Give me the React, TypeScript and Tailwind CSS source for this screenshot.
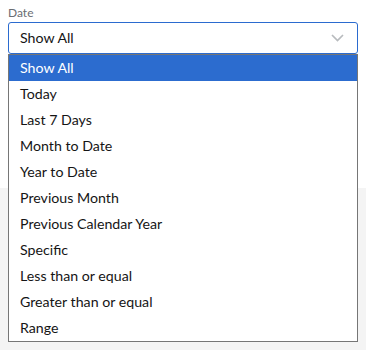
import { useState } from 'react';

const OPTIONS = [
  'Show All',
  'Today',
  'Last 7 Days',
  'Month to Date',
  'Year to Date',
  'Previous Month',
  'Previous Calendar Year',
  'Specific',
  'Less than or equal',
  'Greater than or equal',
  'Range',
];

export default function App() {
  const [selected, setSelected] = useState('Show All');

  return (
    <div className="min-h-[350px] w-[366px] bg-[#f4f4f4] font-['Lato',sans-serif] text-[#151515]">
      {/* Filter panel */}
      <div className="relative h-[188px] bg-white px-2 pt-[5px]">
        <label className="block text-[12px] leading-[16px] text-[#6a6e73]">Date</label>
        <div className="relative mt-[1px]">
          <button className="flex h-[32px] w-full items-center justify-between rounded-[3px] border border-[#2b6bcf] bg-white pl-[11px] pr-[13px] text-left text-[14.2px] leading-[18px]">
            <span className="-mt-[1px]">{selected}</span>
            <svg width="13" height="8" viewBox="0 0 13 8" fill="none" className="text-[#b8bbbe]">
              <path d="M1 1l5.5 5.5L12 1" stroke="currentColor" strokeWidth="1.7" />
            </svg>
          </button>

          {/* Open list */}
          <ul className="absolute left-0 right-0 top-[32px] z-10 border border-[#767676] bg-white">
            {OPTIONS.map((o) => (
              <li
                key={o}
                onClick={() => setSelected(o)}
                className={
                  o === selected
                    ? 'flex h-[26px] items-center bg-[#2c6ccf] pb-[1px] pl-[11px] text-[14.2px] text-white'
                    : 'flex h-[26px] items-center pb-[1px] pl-[11px] text-[14.2px] text-[#151515]'
                }
              >
                {o}
              </li>
            ))}
          </ul>
        </div>
      </div>
    </div>
  );
}
